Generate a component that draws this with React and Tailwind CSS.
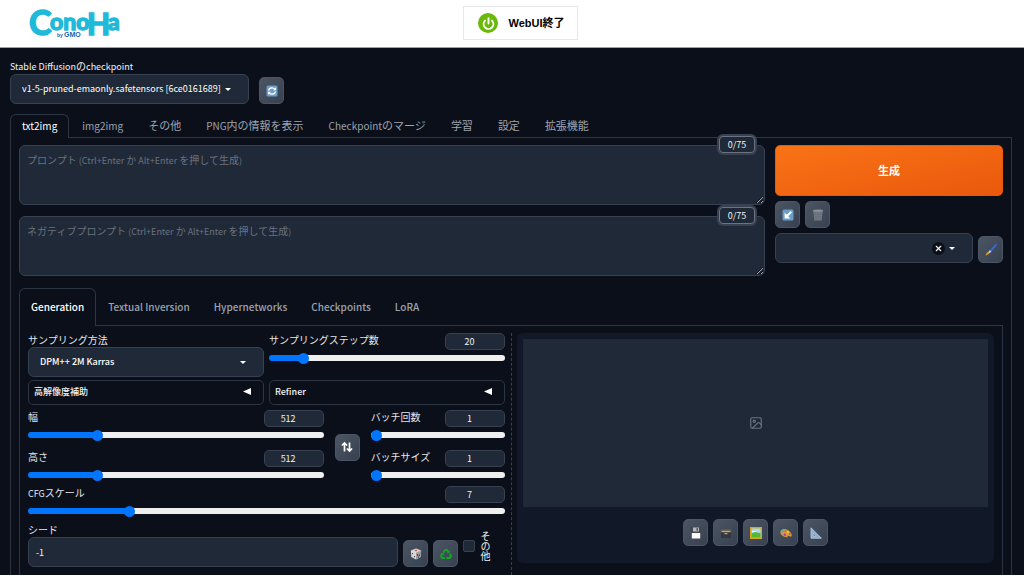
import React, { useState } from 'react';
import { Image as ImageIcon, Power, X } from 'lucide-react';

const MAIN_TABS = ['txt2img', 'img2img', 'その他', 'PNG内の情報を表示', 'Checkpointのマージ', '学習', '設定', '拡張機能'];
const SUB_TABS = ['Generation', 'Textual Inversion', 'Hypernetworks', 'Checkpoints', 'LoRA'];

// latin runs are set one pixel smaller than the japanese text around them
const Mixed = ({ text, latin = 'text-[9px]' }) =>
  text.split(/([\x20-\x7e]+)/).filter(Boolean).map((part, i) =>
    /^[\x20-\x7e]+$/.test(part) ? <span key={i} className={`${latin} whitespace-pre`}>{part}</span> : part
  );

const Caret = () => (
  <svg className="w-[6px] h-[3px] shrink-0 pointer-events-none" viewBox="0 0 6 3"><path d="M0 0h6L3 3z" fill="#fff" /></svg>
);

const Logo = () => (
  <svg className="w-[96px] h-[42px]" viewBox="0 0 96 42" role="img" aria-label="ConoHa by GMO">
    <g fill="#1fb9d9" stroke="#1fb9d9" strokeWidth="1.5" fontFamily="Lato" fontWeight="700">
      <text x="1" y="33" fontSize="34">C</text>
      <text x="22" y="28" fontSize="23">ono</text>
      <text x="59" y="33" fontSize="30">H</text>
      <text x="80" y="28" fontSize="23">a</text>
    </g>
    <g fill="#1a5fb0" fontFamily="Liberation Sans" fontWeight="700">
      <text x="29" y="35" fontSize="5">by</text>
      <text x="36" y="35" fontSize="7">GMO</text>
    </g>
  </svg>
);

const ToolButton = ({ label, children }) => (
  <button
    aria-label={label}
    className="w-[25px] h-[27px] shrink-0 flex items-center justify-center rounded-[5px] border border-[#4b5563] bg-gradient-to-br from-[#4b5563] to-[#374151] text-white"
  >
    <svg className="w-3 h-3" viewBox="0 0 12 12" fill="none">{children}</svg>
  </button>
);

const Refresh = () => (
  <>
    <rect x="0.5" y="0.5" width="11" height="11" rx="1.5" fill="#6d9cc6" />
    <path d="M2.5 5.5a3.5 3 0 0 1 6.3-1.4M9.5 6.5a3.5 3 0 0 1-6.3 1.4" stroke="#fff" strokeWidth="1.4" />
    <path d="M10 2.3v3H7zM2 9.7v-3h3z" fill="#fff" />
  </>
);
const ArrowIn = () => (
  <>
    <rect x="0.5" y="0.5" width="11" height="11" rx="1.5" fill="#6d9cc6" />
    <path d="M9.3 2.7 5 7" stroke="#fff" strokeWidth="2" />
    <path d="M2.6 3.6v5.8h5.8z" fill="#fff" />
  </>
);
const Trash = () => (
  <>
    <path d="M1.2 1.5h9.6l-1.200 10H2.400z" fill="#747a82" />
    <path d="M3.5 3l.7 8M6 3v8M8.500 3l-.7 8M2 5h8M2.300 8h7.400" stroke="#646b75" strokeWidth="0.6" />
    <ellipse cx="6" cy="1.700" rx="5" ry="1.100" fill="#8b9098" />
  </>
);
const Brush = () => (
  <>
    <path d="M11 .8 4.500 8" stroke="#3568d4" strokeWidth="2" strokeLinecap="round" />
    <path d="M5.600 6.800 4 8.600" stroke="#c9ced6" strokeWidth="2" />
    <path d="M4.600 8.800C4 10.500 2.500 11 .5 11.500c.8-1.300.8-3 2.700-3.800z" fill="#e39a2d" />
  </>
);
const Swap = () => (
  <path d="M3.500 10.500V2.200M.9 4.500 3.500 1.900l2.600 2.600M8.500 1.500v8.300M5.900 7.500l2.600 2.600 2.600-2.600" stroke="#fff" strokeWidth="1.700" />
);
const Dice = () => (
  <>
    <path d="M6 .6 11.200 2.600 10.500 9 6 11.600 1.300 9 .8 2.600z" fill="#d8d8da" />
    <path d="M6 4.800 11.200 2.600 10.500 9 6 11.600z" fill="#9b9ba0" />
    <ellipse cx="6" cy="2.500" rx="1.300" ry=".7" fill="#d94b3f" />
    <path d="M2.400 5v1.200M4.400 8v1.200M7.500 6.200v1.500M9.400 6.500v1.500M8.500 8.500v1" stroke="#333" strokeWidth="1" />
  </>
);
const Recycle = () => (
  <g stroke="#10a820" strokeWidth="2">
    <path d="M3.300 4.700 5 1.900h2l1.500 2.500" />
    <path d="M9.800 5.800 11 8.200 9.800 10H6.700" />
    <path d="M5 10H2.200L1 8l1.500-2.600" />
    <path d="M9.300 2.500v2.200H7M7.600 8.700 6.500 10l1.100 1.300M1.200 5.600h2l.6 1.600" strokeWidth="1" />
  </g>
);
const Floppy = () => (
  <>
    <path d="M.8.500h10.400v11H.8z" fill="#43474d" />
    <path d="M3 .5h6v4H3z" fill="#b5bac0" />
    <path d="M6.500 1h1.400v2.700H6.500z" fill="#4b4f55" />
    <path d="M1.800 6h8.400v5.500H1.800z" fill="#fafafa" />
  </>
);
const FileBox = () => (
  <>
    <path d="M1 2h10v9H1z" fill="#34373c" />
    <path d="M1 2h10l.7 2.500H.3z" fill="#55585d" />
    <path d="M1.500 4.500h9" stroke="#e8a33c" strokeWidth="1.400" />
    <path d="M4.500 6.700h3" stroke="#b9bcc1" />
  </>
);
const Picture = () => (
  <>
    <path d="M.7.700h10.600v10.600H.7z" fill="#a9d8f0" stroke="#d8a51d" strokeWidth="1.500" />
    <path d="M1.500 6.500 5 5l5.500 1.200v4.300h-9z" fill="#55b92f" />
    <path d="M2 4.500h4" stroke="#fff" />
  </>
);
const Palette = () => (
  <>
    <path d="M.4 4.700C1 1.700 5 1.400 8.200 3.300s4.300 5 3 6.300c-1 .8-1.700-1.100-3-.7-1.200.4-.3 1.500-1.900 1.300C3 9.900-.1 7.600.4 4.700z" fill="#dc9639" />
    <circle cx="2.600" cy="4.400" r="1.100" fill="#2bb3d6" />
    <circle cx="5.400" cy="3.900" r="1" fill="#46b83d" />
    <circle cx="8" cy="5.200" r="1" fill="#e9d43a" />
    <circle cx="4.900" cy="7.700" r="1.200" fill="#a83ac4" />
    <circle cx="9.700" cy="7" r=".8" fill="#df3d33" />
  </>
);
const Triangle = () => (
  <path d="M1 .8v10.400h10.400zM3.200 6v3h3z" fill="#8fadc9" fillRule="evenodd" stroke="#b9d2ea" strokeWidth=".8" />
);

const Tabs = ({ items, active, onSelect, className }) => (
  <div role="tablist" className={`flex relative z-10 ${className}`}>
    {items.map((t) => (
      <button
        key={t}
        role="tab"
        aria-selected={t === active}
        onClick={() => onSelect(t)}
        className={`px-[11px] pb-[2px] border text-[11px] leading-4 whitespace-nowrap ${
          t === active
            ? 'rounded-t-md border-[#2b3543] border-b-0 bg-[#0b0f19] text-white'
            : 'border-transparent text-[#9ca3af]'
        }`}
      >
        <Mixed text={t} latin="text-[10px]" />
      </button>
    ))}
  </div>
);

const Prompt = ({ id, text }) => (
  <div className="relative flex">
    <textarea
      id={id}
      placeholder=" "
      className="peer block w-full h-[60px] px-2 py-2 rounded-md border border-[#374151] bg-[#1f2937] text-[10px] text-gray-100 outline-none"
    />
    <label htmlFor={id} className="absolute left-2 top-[7px] hidden peer-placeholder-shown:block text-[10px] leading-[15px] text-[#6b7280] pointer-events-none">
      <Mixed text={text} />
    </label>
    <span className="absolute right-[10px] -top-[9px] w-[36px] h-[17px] flex items-center justify-center rounded-[4px] border border-[#6b7280] bg-[#1f2937] text-[9px] ring-2 ring-[#374151] text-gray-100">
      0/75
    </span>
  </div>
);

const Slider = ({ id, label, value, min, max }) => {
  const [v, setV] = useState(value);
  const pct = ((v - min) / (max - min)) * 100;
  return (
    <div>
      <div className="flex justify-between items-start h-[17px]">
        <label htmlFor={id} className="text-[10px] leading-[14px] text-gray-200 whitespace-nowrap"><Mixed text={label} /></label>
        <input
          type="text"
          aria-label={`${label} value`}
          value={v}
          onChange={(e) => setV(Number(e.target.value) || min)}
          className="w-[60px] h-[17px] pr-[11px] rounded-[5px] border border-[#374151] bg-[#1f2937] text-center text-[9px] text-gray-100 outline-none"
        />
      </div>
      <input
        id={id}
        type="range"
        min={min}
        max={max}
        value={v}
        onChange={(e) => setV(Number(e.target.value))}
        className="block w-full h-[6px] mt-[5px] rounded-full appearance-none [&::-webkit-slider-thumb]:appearance-none [&::-webkit-slider-thumb]:w-[11px] [&::-webkit-slider-thumb]:h-[11px] [&::-webkit-slider-thumb]:rounded-full [&::-webkit-slider-thumb]:bg-[#0075ff]"
        style={{ background: `linear-gradient(to right, #0075ff ${pct}%, #efefef ${pct}%)` }}
      />
    </div>
  );
};

const Accordion = ({ title }) => (
  <button aria-expanded="false" className="h-[25px] pl-[5px] pr-3 pb-[2px] flex items-center justify-between rounded-[5px] border border-[#2b3543] text-[9px] font-medium text-gray-100">
    {title}
    <svg className="w-2 h-[7px]" viewBox="0 0 8 7"><path d="M8 0v7L0 3.500z" fill="#fff" /></svg>
  </button>
);

const Select = ({ id, value, className = '' }) => (
  <div className={`h-[30px] pl-[11px] pr-[17px] flex items-center rounded-md border border-[#374151] bg-[#1f2937] ${className}`}>
    <select id={id} className="appearance-none flex-1 min-w-0 text-[9px] text-white bg-transparent outline-none">
      <option>{value}</option>
    </select>
    <Caret />
  </div>
);

const App = () => {
  const [tab, setTab] = useState('txt2img');
  const [sub, setSub] = useState('Generation');

  return (
    <div className="h-screen flex flex-col overflow-hidden bg-white pb-[3px] font-['Noto_Sans_CJK_JP',sans-serif]">
      <header className="h-12 shrink-0 grid grid-cols-3 items-center border-b border-gray-400 pl-7 pr-[10px] pb-px">
        <Logo />
        <button className="justify-self-center w-[115px] h-[34px] flex items-center gap-[10px] pl-[14px] border border-gray-200 text-black text-[11px] font-bold font-['Liberation_Sans','Noto_Sans_CJK_JP',sans-serif] whitespace-nowrap">
          <span className="w-5 h-5 flex items-center justify-center rounded-full bg-[#69b90b]">
            <Power size={13} color="#fff" strokeWidth={3.5} />
          </span>
          WebUI終了
        </button>
      </header>

      <main className="flex-1 min-h-0 flex flex-col overflow-hidden bg-[#0b0f19] pl-[10px] pr-3 pt-[10px]">
        <div className="flex items-end gap-[10px] shrink-0">
          <div>
            <label htmlFor="ckpt" className="block text-[10px] leading-[15px] text-gray-100"><Mixed text="Stable Diffusionのcheckpoint" /></label>
            <Select id="ckpt" value="v1-5-pruned-emaonly.safetensors [6ce0161689]" className="w-[239px]" />
          </div>
          <ToolButton label="更新"><Refresh /></ToolButton>
        </div>

        <div className="mt-[10px] shrink-0"><Tabs items={MAIN_TABS} active={tab} onSelect={setTab} className="h-6 gap-px" /></div>
        <section className="-mt-px flex-1 flex flex-col border border-b-0 border-[#2b3543] px-2 pt-[7px]">
          <div className="flex gap-[10px] shrink-0">
            <div className="flex-1 flex flex-col gap-[11px]">
              <Prompt id="prompt" text="プロンプト (Ctrl+Enter か Alt+Enter を押して生成)" />
              <Prompt id="negative" text="ネガティブプロンプト (Ctrl+Enter か Alt+Enter を押して生成)" />
            </div>
            <div className="w-[228px] flex flex-col gap-[5px]">
              <button className="h-[51px] rounded-[5px] border border-[#ea580c] bg-gradient-to-br from-[#f97316] to-[#ea580c] text-white text-[11px] font-bold">生成</button>
              <div className="flex gap-[5px]">
                <ToolButton label="読み込み"><ArrowIn /></ToolButton>
                <ToolButton label="クリア"><Trash /></ToolButton>
              </div>
              <div className="flex items-end gap-[5px]">
                <div className="flex-1 h-[30px] pl-[11px] pr-[17px] flex items-center gap-1 rounded-md border border-[#374151] bg-[#1f2937]">
                  <select aria-label="スタイル" className="appearance-none flex-1 min-w-0 text-[9px] bg-transparent outline-none"><option></option></select>
                  <button aria-label="消去" className="w-[13px] h-[13px] flex items-center justify-center rounded-full bg-[#0b0f19] text-white"><X size={9} strokeWidth={3} /></button>
                  <Caret />
                </div>
                <ToolButton label="スタイル編集"><Brush /></ToolButton>
              </div>
            </div>
          </div>

          <div className="mt-3 shrink-0"><Tabs items={SUB_TABS} active={sub} onSelect={setSub} className="h-[38px] font-medium" /></div>
          <section className="-mt-px flex-1 flex border border-b-0 border-[#2b3543] px-2 pt-[7px]">
            <div className="flex-1 min-w-0">
              <div className="grid grid-cols-2 gap-x-[5px] gap-y-[3px]">
                <div>
                  <label htmlFor="sampler" className="block text-[10px] leading-[14px] text-gray-200">サンプリング方法</label>
                  <Select id="sampler" value="DPM++ 2M Karras" className="font-medium" />
                </div>
                <Slider id="steps" label="サンプリングステップ数" value={20} min={1} max={150} />
                <Accordion title="高解像度補助" />
                <Accordion title="Refiner" />
              </div>

              <div className="flex items-center mt-[5px]">
                <div className="flex-[11] flex flex-col gap-3">
                  <Slider id="width" label="幅" value={512} min={64} max={2048} />
                  <Slider id="height" label="高さ" value={512} min={64} max={2048} />
                </div>
                <div className="mx-[11px] pt-[6px]"><ToolButton label="入れ替え"><Swap /></ToolButton></div>
                <div className="flex-[5] flex flex-col gap-3">
                  <Slider id="count" label="バッチ回数" value={1} min={1} max={100} />
                  <Slider id="size" label="バッチサイズ" value={1} min={1} max={8} />
                </div>
              </div>

              <div className="mt-2"><Slider id="cfg" label="CFGスケール" value={7} min={1} max={30} /></div>

              <div className="flex items-end gap-[5px] mt-[9px]">
                <div className="flex-1">
                  <label htmlFor="seed" className="block text-[10px] leading-[14px] text-gray-200">シード</label>
                  <input id="seed" defaultValue="-1" className="block w-full h-[30px] px-[7px] rounded-md border border-[#374151] bg-[#1f2937] text-[9px] text-gray-100 outline-none" />
                </div>
                <ToolButton label="ランダム"><Dice /></ToolButton>
                <ToolButton label="再利用"><Recycle /></ToolButton>
                <label className="w-[42px] flex items-center gap-1 pb-[6px] text-[10px] leading-3 text-gray-100">
                  <input type="checkbox" className="appearance-none w-3 h-3 rounded-[2px] border border-[#374151] bg-[#1f2937] checked:bg-blue-600" />
                  <span className="[writing-mode:vertical-rl]">その他</span>
                </label>
              </div>
            </div>

            <div className="w-3 flex justify-center"><div className="border-l border-dashed border-[#374151]" /></div>

            <div className="flex-1 min-w-0">
              <div className="rounded-md bg-[#111827] p-[6px] pb-[17px]">
                <div className="h-[168px] flex items-center justify-center bg-[#1f2937] text-[#6b7280]">
                  <ImageIcon size={14} strokeWidth={2} />
                </div>
                <div className="flex justify-center gap-[5px] mt-3">
                  <ToolButton label="保存"><Floppy /></ToolButton>
                  <ToolButton label="Zip"><FileBox /></ToolButton>
                  <ToolButton label="img2imgに転送"><Picture /></ToolButton>
                  <ToolButton label="inpaintに転送"><Palette /></ToolButton>
                  <ToolButton label="その他に転送"><Triangle /></ToolButton>
                </div>
              </div>
            </div>
          </section>
        </section>
      </main>
    </div>
  );
};

export default App;
